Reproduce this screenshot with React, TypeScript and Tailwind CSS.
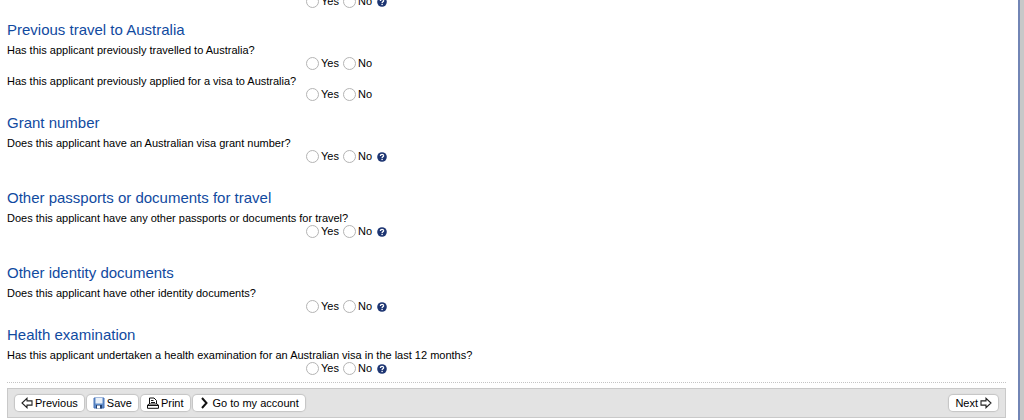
import React, { useState } from "react";

interface Question {
  id: string;
  text: string;
  help?: boolean;
}

interface Section {
  title: string;
  questions: Question[];
  spaced?: boolean;
}

const SECTIONS: Section[] = [
  {
    title: "Previous travel to Australia",
    questions: [
      {
        id: "travelled",
        text: "Has this applicant previously travelled to Australia?",
      },
      {
        id: "applied",
        text: "Has this applicant previously applied for a visa to Australia?",
      },
    ],
  },
  {
    title: "Grant number",
    questions: [
      {
        id: "grant",
        text: "Does this applicant have an Australian visa grant number?",
        help: true,
      },
    ],
    spaced: true,
  },
  {
    title: "Other passports or documents for travel",
    questions: [
      {
        id: "passports",
        text: "Does this applicant have any other passports or documents for travel?",
        help: true,
      },
    ],
    spaced: true,
  },
  {
    title: "Other identity documents",
    questions: [
      {
        id: "identity",
        text: "Does this applicant have other identity documents?",
        help: true,
      },
    ],
  },
  {
    title: "Health examination",
    questions: [
      {
        id: "health",
        text: "Has this applicant undertaken a health examination for an Australian visa in the last 12 months?",
        help: true,
      },
    ],
  },
];

function HelpIcon() {
  return (
    <svg viewBox="0 0 10 10" className="h-[10px] w-[10px]" aria-hidden="true">
      <circle cx="5" cy="5" r="4.8" fill="#1d3572" />
      <path
        d="M3.4 4C3.4 1.9 6.7 2 6.6 3.9C6.5 4.9 5.1 4.8 5.1 6.1"
        fill="none"
        stroke="#fff"
        strokeWidth="1.3"
      />
      <rect x="4.4" y="6.8" width="1.4" height="1.3" fill="#fff" />
    </svg>
  );
}

function ArrowIcon({ className }: { className?: string }) {
  return (
    <svg viewBox="0 0 12 12" className={`h-3 w-3 ${className ?? ""}`} aria-hidden="true">
      <path
        d="M1 3.9H6V1.3L11 6L6 10.7V8.1H1Z"
        fill="#fff"
        stroke="#222"
        strokeWidth="1.1"
      />
    </svg>
  );
}

function SaveIcon() {
  return (
    <svg viewBox="0 0 12 12" className="h-3 w-3" aria-hidden="true">
      <path d="M1 1H11V11H1Z" fill="#5f8cc9" stroke="#4673b8" />
      <rect x="2.5" y="1" width="7" height="5.5" fill="#e9f0f8" />
      <rect x="3" y="8" width="6" height="3.5" fill="#24406f" />
      <rect x="4" y="8.5" width="3" height="3" fill="#fff" />
    </svg>
  );
}

function PrintIcon() {
  return (
    <svg viewBox="0 0 12 12" className="h-3 w-3" aria-hidden="true">
      <path
        d="M2.5 7V1H7L9.5 3.5V7M4 3.5H6.5M4 5.5H8"
        fill="none"
        stroke="#111"
      />
      <path d="M0.5 11.3V8L2.2 7H9.8L11.5 8V11.3Z" fill="#fff" stroke="#111" />
      <path d="M1 8.5H11" stroke="#111" />
    </svg>
  );
}

function ChevronIcon() {
  return (
    <svg viewBox="0 0 12 12" className="h-3 w-3" aria-hidden="true">
      <path d="M3 1L7.5 6L3 11" fill="none" stroke="#111" strokeWidth="2" />
    </svg>
  );
}

function YesNo({ id, help }: { id: string; help?: boolean }) {
  const [value, setValue] = useState("");

  return (
    <div className="ml-[299px] flex h-[13px] items-center">
      {["Yes", "No"].map((option) => (
        <label key={option} className="flex w-[37px] items-center gap-0.5">
          <input
            type="radio"
            name={id}
            value={option}
            checked={value === option}
            onChange={() => setValue(option)}
            className="h-[13px] w-[13px] shrink-0 appearance-none rounded-full border border-[#b4b4b4] bg-white checked:border-4 checked:border-[#1d3572]"
          />
          {option}
        </label>
      ))}
      {help && (
        <button type="button" aria-label="Help" className="-ml-[3px]">
          <HelpIcon />
        </button>
      )}
    </div>
  );
}

function ToolButton({ children }: { children: React.ReactNode }) {
  return (
    <button
      type="button"
      className="flex h-4 items-center gap-0.5 rounded-sm bg-white px-1.5 shadow-[0_0_1px_1px_#c4c4c4]"
    >
      {children}
    </button>
  );
}

export default function App() {
  return (
    <div className="flex min-h-screen overflow-hidden border-r-4 border-[#c8c8c8] bg-white font-['Liberation_Sans',Arial,sans-serif] text-[11px] leading-[13px] text-black">
      <div className="flex-1 border-r-2 border-[#7285b5] pr-3 pl-[7px]">
        <form className="-mt-[5px] border-b border-dotted border-[#c4c4c4] pb-0.5">
          <YesNo id="previous" help />
          {SECTIONS.map((section) => (
            <section key={section.title} className={section.spaced ? "mb-[26px]" : "mb-[5px]"}>
              <h2 className="mt-[13px] mb-[5px] text-[15px] leading-[18px] text-[#114a9f]">
                {section.title}
              </h2>
              <div className="flex flex-col gap-[5px]">
                {section.questions.map((question) => (
                  <fieldset key={question.id}>
                    <legend>{question.text}</legend>
                    <YesNo id={question.id} help={question.help} />
                  </fieldset>
                ))}
              </div>
            </section>
          ))}
        </form>

        {/* Page actions */}
        <div className="mt-[5px] flex h-[30px] items-center justify-between border border-[#c9c9c9] bg-[#e3e3e3] px-[7px]">
          <div className="flex gap-[3px]">
            <ToolButton>
              <ArrowIcon className="rotate-180" />
              Previous
            </ToolButton>
            <ToolButton>
              <SaveIcon />
              Save
            </ToolButton>
            <ToolButton>
              <PrintIcon />
              Print
            </ToolButton>
            <ToolButton>
              <ChevronIcon />
              Go to my account
            </ToolButton>
          </div>
          <ToolButton>
            Next
            <ArrowIcon />
          </ToolButton>
        </div>
      </div>
    </div>
  );
}
